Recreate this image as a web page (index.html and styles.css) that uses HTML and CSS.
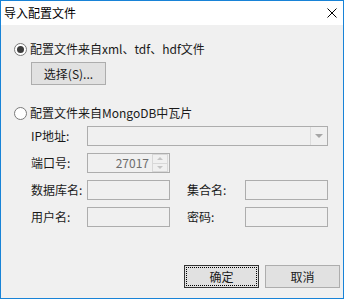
FILE: index.html
```html
<!DOCTYPE html>
<html lang="zh">
<head>
  <meta charset="UTF-8" />
  <title>导入配置文件</title>
  <link rel="stylesheet" href="styles.css">
</head>
<body>
  <div class="window">
    <div class="titlebar">
      <span class="title">导入配置文件</span>
      <svg class="close" width="10" height="10" viewBox="0 0 10 10">
        <path d="M0.5 0.5L9.5 9.5M9.5 0.5L0.5 9.5" stroke="#000" stroke-width="1" fill="none"/>
      </svg>
    </div>

    <div class="content">
      <label class="option">
        <span class="radio checked"></span>
        <span>配置文件来自xml、tdf、hdf文件</span>
      </label>
      <button class="btn select-btn">选择(S)...</button>

      <label class="option second">
        <span class="radio"></span>
        <span>配置文件来自MongoDB中瓦片</span>
      </label>

      <div class="fields">
        <span class="lbl">IP地址:</span>
        <div class="box combo">
          <span class="drop"><span class="arrow-down"></span></span>
        </div>

        <span class="lbl">端口号:</span>
        <div class="box spin">
          <span class="spin-val">27017</span>
          <span class="spin-btns">
            <span class="sb"><span class="arrow-up"></span></span>
            <span class="sb"><span class="arrow-down light"></span></span>
          </span>
        </div>
        <span class="filler"></span>

        <span class="lbl">数据库名:</span>
        <div class="box"></div>
        <span class="lbl right">集合名:</span>
        <div class="box"></div>

        <span class="lbl">用户名:</span>
        <div class="box"></div>
        <span class="lbl right">密码:</span>
        <div class="box"></div>
      </div>

      <div class="footer">
        <button class="btn default">确定</button>
        <button class="btn">取消</button>
      </div>
    </div>
  </div>
</body>
</html>
```

FILE: styles.css
```css
body {
  margin: 0;
  background: #fff;
  font-family: "Noto Sans CJK SC", "Noto Sans", sans-serif;
  font-size: 12px;
  color: #1a1a1a;
}
.window {
  width: 344px;
  height: 299px;
  box-sizing: border-box;
  border: 1px solid #1883d7;
  display: flex;
  flex-direction: column;
}
.titlebar {
  height: 24px;
  background: #fff;
  display: flex;
  align-items: center;
  justify-content: space-between;
  padding: 0 6px 0 3px;
  flex-shrink: 0;
}
.title {
  line-height: 14px;
  color: #000;
  margin-top: -1px;
}
.close {
  margin-top: -1px;
}
.content {
  flex: 1;
  background: #f0f0f0;
  display: flex;
  flex-direction: column;
  align-items: flex-start;
  padding: 14px 3px 10px 13px;
}
.option {
  display: flex;
  align-items: center;
  height: 20px;
  gap: 3px;
  line-height: 14px;
}
.option.second {
  margin-top: 18px;
}
.radio {
  width: 13px;
  height: 13px;
  box-sizing: border-box;
  border: 1px solid #7a7a7a;
  border-radius: 50%;
  background: #fff;
  display: flex;
  align-items: center;
  justify-content: center;
}
.radio.checked::after {
  content: "";
  width: 7px;
  height: 7px;
  border-radius: 50%;
  background: #3c3c3c;
}
.btn {
  width: 75px;
  height: 23px;
  box-sizing: border-box;
  border: 1px solid #adadad;
  background: #e1e1e1;
  font-family: inherit;
  font-size: 12px;
  color: #1a1a1a;
  padding: 0;
  line-height: 14px;
}
.select-btn {
  margin: 3px 0 0 17px;
}
.fields {
  margin: 3px 0 0 17px;
  display: grid;
  grid-template-columns: 56px 83px 75px 83px;
  grid-auto-rows: 20px;
  row-gap: 7px;
}
.lbl {
  display: flex;
  align-items: center;
  line-height: 14px;
  white-space: nowrap;
}
.lbl.right {
  padding-left: 17px;
}
.filler {
  grid-column: 3 / 5;
}
.box {
  box-sizing: border-box;
  border: 1px solid #adadad;
  background: #f0f0f0;
}
.combo {
  grid-column: 2 / 5;
  display: flex;
  justify-content: flex-end;
}
.drop {
  width: 16px;
  border-left: 1px solid #dcdcdc;
  display: flex;
  align-items: center;
  justify-content: center;
}
.arrow-down {
  width: 0;
  height: 0;
  border-left: 4px solid transparent;
  border-right: 4px solid transparent;
  border-top: 4px solid #a6a6a6;
}
.arrow-down.light {
  border-left-width: 3px;
  border-right-width: 3px;
  border-top: 3px solid #c4c4c4;
}
.arrow-up {
  width: 0;
  height: 0;
  border-left: 3px solid transparent;
  border-right: 3px solid transparent;
  border-bottom: 3px solid #c4c4c4;
}
.spin {
  display: flex;
  align-items: stretch;
}
.spin-val {
  flex: 1;
  text-align: right;
  color: #6d6d6d;
  line-height: 18px;
  padding-right: 3px;
}
.spin-btns {
  width: 16px;
  display: flex;
  flex-direction: column;
  margin-right: 1px;
}
.sb {
  flex: 1;
  border: 1px solid #d8d8d8;
  display: flex;
  align-items: center;
  justify-content: center;
}
.sb + .sb {
  border-top: none;
}
.footer {
  margin-top: auto;
  align-self: flex-end;
  display: flex;
  gap: 6px;
}
.btn.default {
  border-color: #333;
  outline: 1px dotted #000;
  outline-offset: -3px;
}
```
